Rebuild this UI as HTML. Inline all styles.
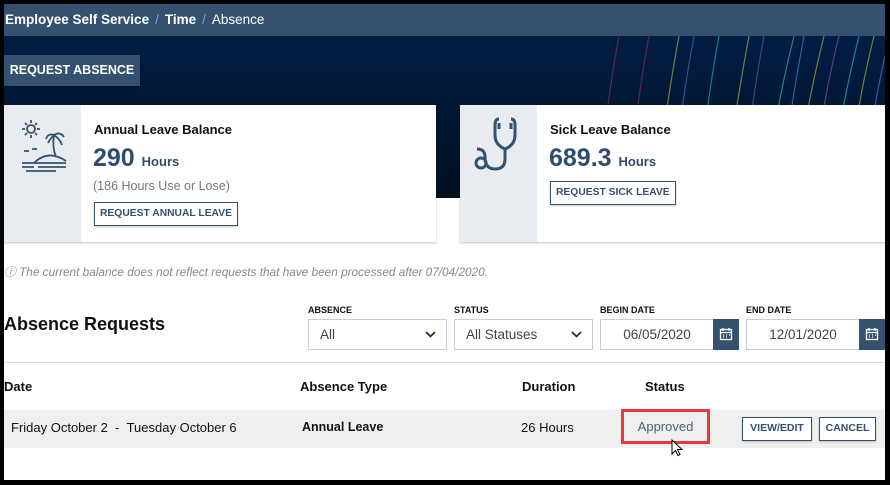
<!DOCTYPE html>
<html><head><style>
*{box-sizing:border-box;margin:0;padding:0}
body{width:890px;height:485px;background:#000;font-family:"Liberation Sans",sans-serif;position:relative;overflow:hidden}
#pg{position:absolute;left:4px;top:4px;width:881px;height:476px;background:#fff;overflow:hidden}
.a{position:absolute}
.hdr{left:0;top:0;width:881px;height:32px;background:#34526f;color:#fff;font-size:13.5px;line-height:31px;padding-left:1px}
.hdr b{font-weight:bold}.hdr .s{color:#8aa0b5;margin:0 6px}
.ban{left:0;top:32px;width:881px;height:162px;background:linear-gradient(180deg,#021d45,#00101f)}
.btn1{left:0;top:51px;width:136px;height:31px;background:#34526f;color:#fff;font-weight:bold;font-size:12.5px;line-height:31px;text-align:center;box-shadow:0 1px 2px rgba(0,0,0,.4)}
.card{background:#fff;top:101px;height:137px;box-shadow:0 1px 2px rgba(0,0,0,.25)}
.ip{position:absolute;left:0;top:0;width:77px;height:137px;background:#e8ecf0}
.t{position:absolute;left:90px;top:17px;font-size:13px;font-weight:bold;color:#111}
.n{position:absolute;left:89px;top:39px;font-size:25px;font-weight:bold;color:#2f4d6c}
.n span{font-size:13px}
.ob{position:absolute;border:1.5px solid #34526f;color:#34526f;font-size:10.3px;font-weight:bold;height:24px;line-height:21px;padding:0 5px;box-shadow:0 1px 2px rgba(0,0,0,.2)}
.lbl{font-size:9px;font-weight:bold;color:#111;top:301px}
.inp{top:315px;height:31px;border:1px solid #ccd;font-size:13.5px;color:#444;line-height:29px}
.inp svg{position:absolute;right:10px;top:11px}
.cal{top:315px;width:26px;height:31px;background:#34526f}
.th{top:375px;font-size:13px;font-weight:bold;color:#111}
.sb{border:1.5px solid #34526f;color:#34526f;font-size:10.5px;font-weight:bold;height:24px;line-height:21px;text-align:center;top:413px;background:#fff;box-shadow:0 1px 2px rgba(0,0,0,.2)}
</style></head><body><div id="pg">
<div class="a hdr"><b>Employee Self Service</b><span class="s">/</span><b>Time</b><span class="s">/</span>Absence</div>
<div class="a ban"><svg width="881" height="162" style="position:absolute;left:0;top:0">
<g fill="none" stroke-width="1.2" opacity=".8">
<path d="M615 0 Q600 80 595 162" stroke="#6a2a5a"/><path d="M645 0 Q630 80 625 162" stroke="#6a2a5a"/>
<path d="M675 0 Q660 80 652 162" stroke="#8a9a40"/><path d="M690 0 Q675 80 668 162" stroke="#4a5a9a"/>
<path d="M715 0 Q700 80 695 162" stroke="#2a8aa0"/><path d="M745 0 Q730 80 720 162" stroke="#8a9a40"/>
<path d="M760 0 Q745 80 738 162" stroke="#5a4a9a"/><path d="M790 0 Q770 80 760 162" stroke="#2a9aa0"/>
<path d="M800 0 Q785 80 775 162" stroke="#4a6ab0"/><path d="M820 0 Q800 80 790 162" stroke="#8a9a40"/>
<path d="M835 0 Q815 80 808 162" stroke="#6a4aa0"/><path d="M855 0 Q835 80 825 162" stroke="#2a9ab0"/>
<path d="M870 0 Q850 80 843 162" stroke="#8a9a40"/><path d="M881 20 Q865 90 860 162" stroke="#4a6ab0"/>
</g></svg></div>
<div class="a btn1">REQUEST ABSENCE</div>
<div class="a card" style="left:0;width:432px"><div class="ip">
<svg width="77" height="80" viewBox="0 0 77 80" fill="none" stroke="#34526f" stroke-width="1.8"><circle cx="27" cy="24" r="4"/><path d="M27 15v3M27 30v3M18 24h3M33 24h3M21 18l2 2M31 28l2 2M33 18l-2 2M21 30l2-2"/><path d="M50 30 Q48 42 52 52M50 30 Q44 28 42 34M50 30 Q56 26 60 32M50 30 Q56 34 58 40M50 30 Q46 34 44 38"/><path d="M30 58 Q44 44 62 56M18 58h44M18 62h12M34 62h28M22 66h30"/><path d="M20 46h5M28 44h5"/></svg></div>
<div class="t">Annual Leave Balance</div><div class="n">290 <span>Hours</span></div>
<div class="a" style="left:89px;top:74px;font-size:12.5px;color:#777">(186 Hours Use or Lose)</div>
<div class="ob" style="left:90px;top:97px">REQUEST ANNUAL LEAVE</div></div>
<div class="a card" style="left:456px;width:430px"><div class="ip">
<svg width="77" height="80" viewBox="0 0 77 80" fill="none" stroke="#34526f" stroke-width="3"><path d="M39 18v6M51 18v6M39 14q-4 0-4 6v10q0 10 10 14q10-4 10-14V20q0-6-4-6"/><path d="M45 44v10q0 10-10 10t-10-12q0-8-8-8"/><circle cx="21" cy="58" r="5"/></svg></div>
<div class="t">Sick Leave Balance</div><div class="n">689.3 <span>Hours</span></div>
<div class="ob" style="left:90px;top:76px">REQUEST SICK LEAVE</div></div>
<div class="a" style="left:0;top:259px;font-size:11.8px;font-style:italic;color:#888">ⓘ The current balance does not reflect requests that have been processed after 07/04/2020.</div>
<div class="a" style="left:0;top:310px;font-size:18px;font-weight:bold;color:#111">Absence Requests</div>
<div class="a lbl" style="left:304px">ABSENCE</div><div class="a lbl" style="left:450px">STATUS</div><div class="a lbl" style="left:596px">BEGIN DATE</div><div class="a lbl" style="left:742px">END DATE</div>
<div class="a inp" style="left:304px;width:139px;padding-left:11px">All<svg width="11" height="7"><path d="M1 1l4.5 4.5L10 1" fill="none" stroke="#222" stroke-width="1.6"/></svg></div>
<div class="a inp" style="left:450px;width:139px;padding-left:11px">All Statuses<svg width="11" height="7"><path d="M1 1l4.5 4.5L10 1" fill="none" stroke="#222" stroke-width="1.6"/></svg></div>
<div class="a inp" style="left:596px;width:114px;text-align:center">06/05/2020</div><div class="a cal" style="left:709px"></div>
<div class="a inp" style="left:742px;width:114px;text-align:center">12/01/2020</div><div class="a cal" style="left:855px"></div>
<svg class="a" style="left:715px;top:323px" width="14" height="14" fill="none" stroke="#fff" stroke-width="1.3"><rect x="1.5" y="2.5" width="11" height="10"/><path d="M1.5 5.5h11M4 1v3M10 1v3M4 8h1M7 8h1M10 8h1M4 10h1M7 10h1"/></svg>
<svg class="a" style="left:861px;top:323px" width="14" height="14" fill="none" stroke="#fff" stroke-width="1.3"><rect x="1.5" y="2.5" width="11" height="10"/><path d="M1.5 5.5h11M4 1v3M10 1v3M4 8h1M7 8h1M10 8h1M4 10h1M7 10h1"/></svg>
<div class="a" style="left:0;top:358px;width:881px;height:1px;background:#ddd"></div>
<div class="a th" style="left:0">Date</div><div class="a th" style="left:296px">Absence Type</div><div class="a th" style="left:518px">Duration</div><div class="a th" style="left:641px">Status</div>
<div class="a" style="left:0;top:406px;width:881px;height:38px;background:#efefef"></div>
<div class="a" style="left:7px;top:416px;font-size:13px;color:#111">Friday October 2 &nbsp;- &nbsp;Tuesday October 6</div>
<div class="a" style="left:298px;top:416px;font-size:12.5px;font-weight:bold;color:#111">Annual Leave</div>
<div class="a" style="left:517px;top:416px;font-size:13px;color:#111">26 Hours</div>
<div class="a" style="left:617px;top:405px;width:89px;height:35px;border:3px solid #e8393f;font-size:13px;color:#4a6078;text-align:center;line-height:29px">Approved</div>
<svg class="a" style="left:667px;top:435px" width="12" height="18"><path d="M1 1v14l3.5-3.5 2.5 5 2-1-2.5-5H11z" fill="#fff" stroke="#000"/></svg>
<div class="a sb" style="left:738px;width:70px">VIEW/EDIT</div><div class="a sb" style="left:815px;width:57px">CANCEL</div>
</div></body></html>
